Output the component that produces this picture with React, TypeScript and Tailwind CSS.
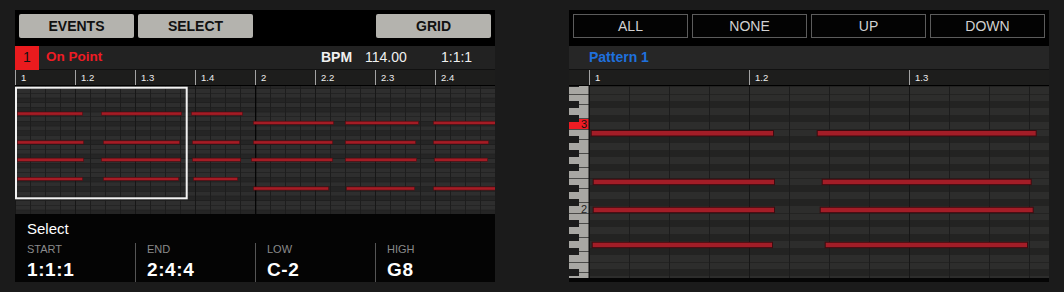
const font = "font-['Liberation_Sans',Arial,sans-serif]";

const blackKey = (k: number) => [2, 4, 7, 9, 11].includes(((k % 12) + 12) % 12);

type NoteRow = { y: number; spans: [number, number][] };

const leftNotes: NoteRow[] = [
  { y: 25.7, spans: [[2, 68], [86, 167], [176, 228]] },
  { y: 34.9, spans: [[238, 319], [330, 404], [418, 481]] },
  { y: 54.5, spans: [[2, 69], [88, 165], [177, 225], [238, 318], [330, 401], [418, 474]] },
  { y: 71.8, spans: [[2, 69], [86, 166], [177, 226], [236, 318], [330, 402], [419, 473]] },
  { y: 91, spans: [[2, 68], [88, 164], [178, 223]] },
  { y: 100.6, spans: [[238, 314], [331, 400], [418, 481]] },
];

const rightNotes: NoteRow[] = [
  { y: 44, spans: [[21.7, 205], [247.7, 467.7]] },
  { y: 92.7, spans: [[23.7, 206], [252.7, 462.7]] },
  { y: 120.7, spans: [[23.7, 206], [250.7, 464.7]] },
  { y: 155.7, spans: [[22.7, 204], [255.7, 459]] },
];

const rowsRange = Array.from({ length: 29 }, (_, i) => i - 1);

function LeftGrid() {
  const h = 128 / 27.43;
  const y0 = 2.4;
  return (
    <svg width={480} height={128} className="block">
      <rect width={480} height={128} fill="#1f1f1f" />
      {rowsRange.map((k) => (
        <rect
          key={k}
          x={0}
          y={y0 + h * k + 0.6}
          width={480}
          height={h - 0.6}
          fill={blackKey(k) ? "#252525" : "#2e2e2e"}
        />
      ))}
      {Array.from({ length: 32 }, (_, i) => i).map((i) => (
        <rect key={i} x={15 * i} y={0} width={1} height={128} fill={i % 4 === 0 ? "#171717" : "#1d1d1d"} />
      ))}
      <rect x={240} y={0} width={1.3} height={128} fill="#050505" />
      {leftNotes.map((r) =>
        r.spans.map(([a, b]) => (
          <rect
            key={`${r.y}-${a}`}
            x={a + 0.3}
            y={r.y + 0.3}
            width={b - a - 0.6}
            height={3.2}
            fill="#a51c25"
            stroke="#4a0d11"
            strokeWidth={0.6}
          />
        ))
      )}
      <rect x={1} y={1.7} width={170.7} height={110.6} fill="none" stroke="#f2f2f2" strokeWidth={2} />
    </svg>
  );
}

function RightGrid() {
  const h = 7;
  const y0 = 1;
  return (
    <svg width={480} height={192} className="block">
      <rect width={480} height={192} fill="#1f1f1f" />
      {rowsRange.map((k) => (
        <rect
          key={k}
          x={20}
          y={y0 + h * k}
          width={460}
          height={h}
          fill={blackKey(k) ? "#232322" : "#2d2d2c"}
        />
      ))}
      {rowsRange
        .filter((k) => !blackKey(k) && !blackKey(k - 1))
        .map((k) => (
          <rect key={`s${k}`} x={20} y={y0 + h * k} width={460} height={1} fill="#232322" />
        ))}
      {Array.from({ length: 12 }, (_, i) => i).map((i) => (
        <rect key={i} x={20 + 40 * i} y={0} width={1} height={192} fill={i % 4 === 0 ? "#161616" : "#1c1c1c"} />
      ))}
      {rightNotes.map((r) =>
        r.spans.map(([a, b]) => (
          <rect
            key={`${r.y}-${a}`}
            x={a + 0.5}
            y={r.y + 0.5}
            width={b - a - 1}
            height={5.5}
            fill="#a31d27"
            stroke="#3e0b0f"
            strokeWidth={1}
          />
        ))
      )}
      {/* keyboard */}
      <rect x={0} y={0} width={20} height={192} fill="#a8a7a3" />
      <rect x={0} y={33} width={20} height={10.3} fill="#ee1c24" />
      {rowsRange.filter(blackKey).map((k) => (
        <g key={`b${k}`}>
          <rect x={0} y={y0 + h * k} width={10} height={h} fill="#1b1b1b" />
          <rect x={10} y={y0 + h * k + 3} width={10} height={1} fill="#4a4a48" />
        </g>
      ))}
      {rowsRange
        .filter((k) => ((k % 12) + 12) % 12 === 1 || ((k % 12) + 12) % 12 === 6)
        .map((k) => (
          <rect key={`w${k}`} x={0} y={y0 + h * k} width={20} height={1} fill="#4a4a48" />
        ))}
      <text x={18} y={42.3} textAnchor="end" fontSize={11} fill="#111" fontFamily="Liberation Sans, Arial, sans-serif">
        3
      </text>
      <text x={18} y={126.6} textAnchor="end" fontSize={11} fill="#222" fontFamily="Liberation Sans, Arial, sans-serif">
        2
      </text>
      <rect x={19.5} y={0} width={1} height={192} fill="#111" />
    </svg>
  );
}

const Ruler = ({ labels, w, lead = 0 }: { labels: string[]; w: number; lead?: number }) => (
  <div className="flex h-[16px] bg-[#1d1d1c] border-b border-black">
    {lead > 0 && <div style={{ width: lead }} className="shrink-0" />}
    {labels.map((l) => (
      <div
        key={l}
        style={{ width: w }}
        className="shrink-0 border-l border-[#a3a3a3] pl-[5px] text-[9.5px] leading-[15px] text-[#eeeeee]"
      >
        {l}
      </div>
    ))}
  </div>
);

const Info = ({ label, value, first }: { label: string; value: string; first?: boolean }) => (
  <div className={`w-[120px] h-[39px] ${first ? "pl-[12px]" : "pl-[11px] border-l border-[#555555]"}`}>
    <div className="pt-[1px] text-[11px] leading-[11px] text-[#8a8a8a]">{label}</div>
    <div className="mt-[5px] text-[19px] leading-[19px] font-bold tracking-[0.6px] text-white">{value}</div>
  </div>
);

export default function App() {
  return (
    <div className={`w-[1064px] h-[292px] bg-[#1b1b1b] flex gap-[74px] pt-[10px] pl-[15px] ${font}`}>
      {/* left screen */}
      <div className="w-[480px] h-[272px] flex flex-col shrink-0">
        <div className="h-[36px] bg-black flex gap-[4px] pl-[4px] pt-[4px]">
          {["EVENTS", "SELECT", "", "GRID"].map((b, i) =>
            b ? (
              <div
                key={i}
                className="w-[115px] h-[24px] rounded-[2px] bg-[#b4b3ae] flex items-center justify-center text-[14px] font-bold text-[#111]"
              >
                {b}
              </div>
            ) : (
              <div key={i} className="w-[115px]" />
            )
          )}
        </div>
        <div className="h-[24px] bg-[#222222] flex items-center text-[14px] border-b border-[#111]">
          <div className="w-[24px] h-[24px] bg-[#ea1b1e] flex items-center justify-center text-[#111]">1</div>
          <div className="w-[282px] pl-[7px] font-bold text-[13.5px] text-[#ee1c24]">On Point</div>
          <div className="w-[44px] font-bold text-[#f0f0f0]">BPM</div>
          <div className="w-[76px] text-[#f0f0f0]">114.00</div>
          <div className="text-[#f0f0f0]">1:1:1</div>
        </div>
        <Ruler labels={["1", "1.2", "1.3", "1.4", "2", "2.2", "2.3", "2.4"]} w={60} />
        <LeftGrid />
        <div className="h-[68px] bg-[#040404]">
          <div className="pt-[6.5px] pl-[12px] text-[15px] leading-[15px] text-white">Select</div>
          <div className="flex mt-[7.5px]">
            <Info label="START" value="1:1:1" first />
            <Info label="END" value="2:4:4" />
            <Info label="LOW" value="C-2" />
            <Info label="HIGH" value="G8" />
          </div>
        </div>
      </div>

      {/* right screen */}
      <div className="w-[480px] h-[272px] flex flex-col shrink-0">
        <div className="h-[36px] bg-black flex gap-[4px] pl-[4px] pt-[4px]">
          {["ALL", "NONE", "UP", "DOWN"].map((b) => (
            <div
              key={b}
              className="w-[115px] h-[24px] border border-[#5c5c5c] bg-[#030303] flex items-center justify-center text-[14px] text-[#d2d2d2]"
            >
              {b}
            </div>
          ))}
        </div>
        <div className="h-[24px] bg-[#262626] flex items-center pl-[20px] border-b border-[#111]">
          <span className="text-[14px] font-bold text-[#1f70dc]">Pattern 1</span>
        </div>
        <Ruler labels={["1", "1.2", "1.3"]} w={160} lead={20} />
        <RightGrid />
        <div className="h-[4px] bg-[#050505]" />
      </div>
    </div>
  );
}
